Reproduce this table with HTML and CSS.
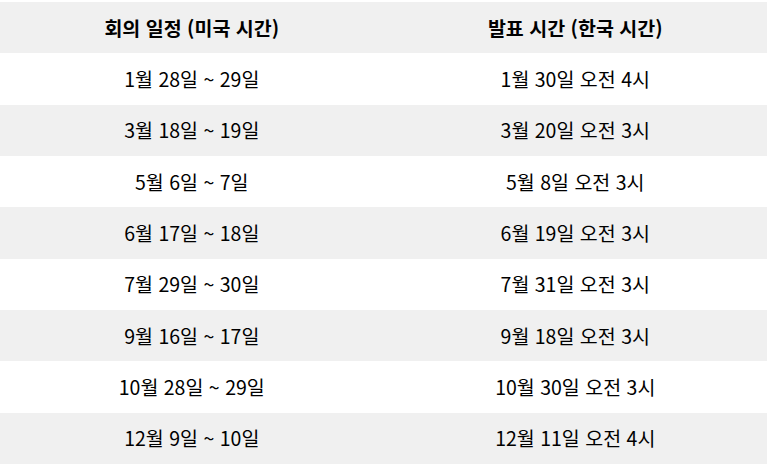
FILE: index.html
```html
<!DOCTYPE html>
<html lang="ko">
<head>
<meta charset="utf-8">
<link rel="stylesheet" href="styles.css">
</head>
<body>
<table class="schedule">
  <thead>
    <tr><th>회의 일정 (미국 시간)</th><th>발표 시간 (한국 시간)</th></tr>
  </thead>
  <tbody>
    <tr><td>1월 28일 ~ 29일</td><td>1월 30일 오전 4시</td></tr>
    <tr><td>3월 18일 ~ 19일</td><td>3월 20일 오전 3시</td></tr>
    <tr><td>5월 6일 ~ 7일</td><td>5월 8일 오전 3시</td></tr>
    <tr><td>6월 17일 ~ 18일</td><td>6월 19일 오전 3시</td></tr>
    <tr><td>7월 29일 ~ 30일</td><td>7월 31일 오전 3시</td></tr>
    <tr><td>9월 16일 ~ 17일</td><td>9월 18일 오전 3시</td></tr>
    <tr><td>10월 28일 ~ 29일</td><td>10월 30일 오전 3시</td></tr>
    <tr><td>12월 9일 ~ 10일</td><td>12월 11일 오전 4시</td></tr>
  </tbody>
</table>
</body>
</html>
```
FILE: styles.css
```css
html, body {
  margin: 0;
  padding: 0;
  background: #ffffff;
}
body {
  padding-top: 2px;
  font-family: "Noto Sans CJK KR", "Noto Sans", sans-serif;
  font-size: 19.5px;
  color: #000;
}
.schedule {
  width: 767px;
  border-collapse: collapse;
  table-layout: fixed;
}
.schedule th,
.schedule td {
  height: 51.33px;
  padding: 0;
  text-align: center;
  vertical-align: middle;
  line-height: 24px;
}
.schedule th {
  font-weight: bold;
}
.schedule thead tr,
.schedule tbody tr:nth-child(even) {
  background: #f0f0f0;
}
```
